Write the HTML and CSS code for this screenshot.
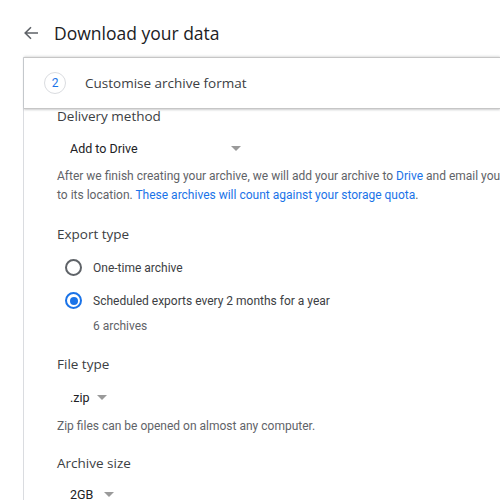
FILE: index.html
```html
<!DOCTYPE html>
<html lang="en">
<head>
<meta charset="utf-8">
<title>Download your data</title>
<link rel="stylesheet" href="styles.css">
</head>
<body>
<header class="topbar">
  <svg class="back" width="16" height="16" viewBox="0 0 16 16" aria-hidden="true">
    <path d="M15 8H2.5M8 2.2L2.2 8L8 13.8" fill="none" stroke="#5f6368" stroke-width="1.6"/>
  </svg>
  <h1 class="title">Download your data</h1>
</header>
<main class="card">
  <div class="step">
    <span class="step-num">2</span>
    <span class="step-label">Customise archive format</span>
  </div>
  <div class="content">
    <h2 class="sec sec-first">Delivery method</h2>
    <div class="select select-wide">
      <span class="select-value">Add to Drive</span>
      <span class="caret"></span>
    </div>
    <p class="help help-two">After we finish creating your archive, we will add your archive to <a class="link">Drive</a> and email you<br>to its location. <a class="link">These archives will count against your storage quota</a>.</p>

    <h2 class="sec">Export type</h2>
    <div class="radio-row radio-first">
      <span class="radio"></span>
      <span class="radio-label">One-time archive</span>
    </div>
    <div class="radio-row">
      <span class="radio radio-on"></span>
      <span class="radio-label">Scheduled exports every 2 months for a year</span>
    </div>
    <div class="sub">6 archives</div>

    <h2 class="sec">File type</h2>
    <div class="select">
      <span class="select-value select-zip">.zip</span>
      <span class="caret"></span>
    </div>
    <p class="help help-one">Zip files can be opened on almost any computer.</p>

    <h2 class="sec sec-size">Archive size</h2>
    <div class="select select-last">
      <span class="select-value select-size">2GB</span>
      <span class="caret"></span>
    </div>
  </div>
</main>
</body>
</html>
```
FILE: styles.css
```css
html, body {
  margin: 0;
  padding: 0;
  background: #fff;
  overflow: hidden;
}
body {
  width: 500px;
  height: 500px;
  font-family: Roboto, "Liberation Sans", sans-serif;
  color: #5f6368;
}
.topbar {
  height: 57px;
  box-sizing: border-box;
  padding: 9px 0 0 23px;
  display: flex;
  align-items: center;
}
.back {
  display: block;
  margin-right: 15px;
}
.title {
  margin: 0;
  font-family: "Open Sans", Roboto, sans-serif;
  font-weight: 400;
  font-size: 17.5px;
  color: #202124;
}
.card {
  margin-left: 23px;
  border-left: 1px solid #dadce0;
  min-height: 443px;
}
.step {
  height: 52px;
  box-sizing: border-box;
  border-top: 1px solid #c6c6c6;
  border-bottom: 1px solid #c6c6c6;
  box-shadow: 0 1px 2px rgba(60,64,67,.25), 0 -1px 2px rgba(60,64,67,.15);
  display: flex;
  align-items: center;
  padding-left: 20px;
}
.step-num {
  width: 20px;
  height: 20px;
  border: 1px solid #dadce0;
  border-radius: 50%;
  display: flex;
  align-items: center;
  justify-content: center;
  font-size: 12px;
  color: #1a73e8;
  margin-right: 19px;
}
.step-label {
  font-family: "Open Sans", Roboto, sans-serif;
  font-size: 13.5px;
  color: #3c4043;
}
.content {
  padding-left: 33px;
}
.sec {
  margin: 19px 0 0;
  font-family: "Open Sans", Roboto, sans-serif;
  font-weight: 500;
  font-size: 13.5px;
  line-height: 20px;
  color: #3c4043;
}
.sec-first {
  margin-top: 0;
  line-height: 14px;
}
.sec-size {
  margin-top: 17px;
}
.select {
  display: flex;
  align-items: center;
  height: 32px;
  margin-top: 7px;
  padding-left: 13px;
}
.select-wide {
  margin-top: 9px;
}
.select-last {
  margin-top: 5px;
}
.select-wide .select-value {
  width: 153px;
}
.select-value {
  font-size: 12.5px;
  font-weight: 400;
  color: #202124;
  margin-right: 8px;
}
.select-zip {
  margin-right: 7px;
}
.select-size {
  margin-right: 11px;
}
.caret {
  width: 0;
  height: 0;
  border-left: 5px solid transparent;
  border-right: 5px solid transparent;
  border-top: 5px solid #9a9a9a;
}
.help {
  margin: 0;
  font-size: 12px;
  line-height: 19px;
  color: #5f6368;
  white-space: nowrap;
}
.help-two {
  margin-top: 3px;
}
.help-one {
  margin-top: 4px;
}
.link {
  color: #1a73e8;
}
.radio-row {
  height: 33px;
  display: flex;
  align-items: center;
  padding-left: 8px;
}
.radio-first {
  margin-top: 7px;
}
.radio {
  width: 13px;
  height: 13px;
  border: 2px solid #5f6368;
  border-radius: 50%;
  box-sizing: content-box;
  margin-right: 11px;
  position: relative;
}
.radio-on {
  border-color: #1a73e8;
}
.radio-on::after {
  content: "";
  position: absolute;
  left: 2.5px;
  top: 2.5px;
  width: 8px;
  height: 8px;
  border-radius: 50%;
  background: #1a73e8;
}
.radio-label {
  font-size: 12px;
  color: #3c4043;
}
.sub {
  padding-left: 36px;
  font-size: 12px;
  line-height: 18px;
  color: #5f6368;
}
```
